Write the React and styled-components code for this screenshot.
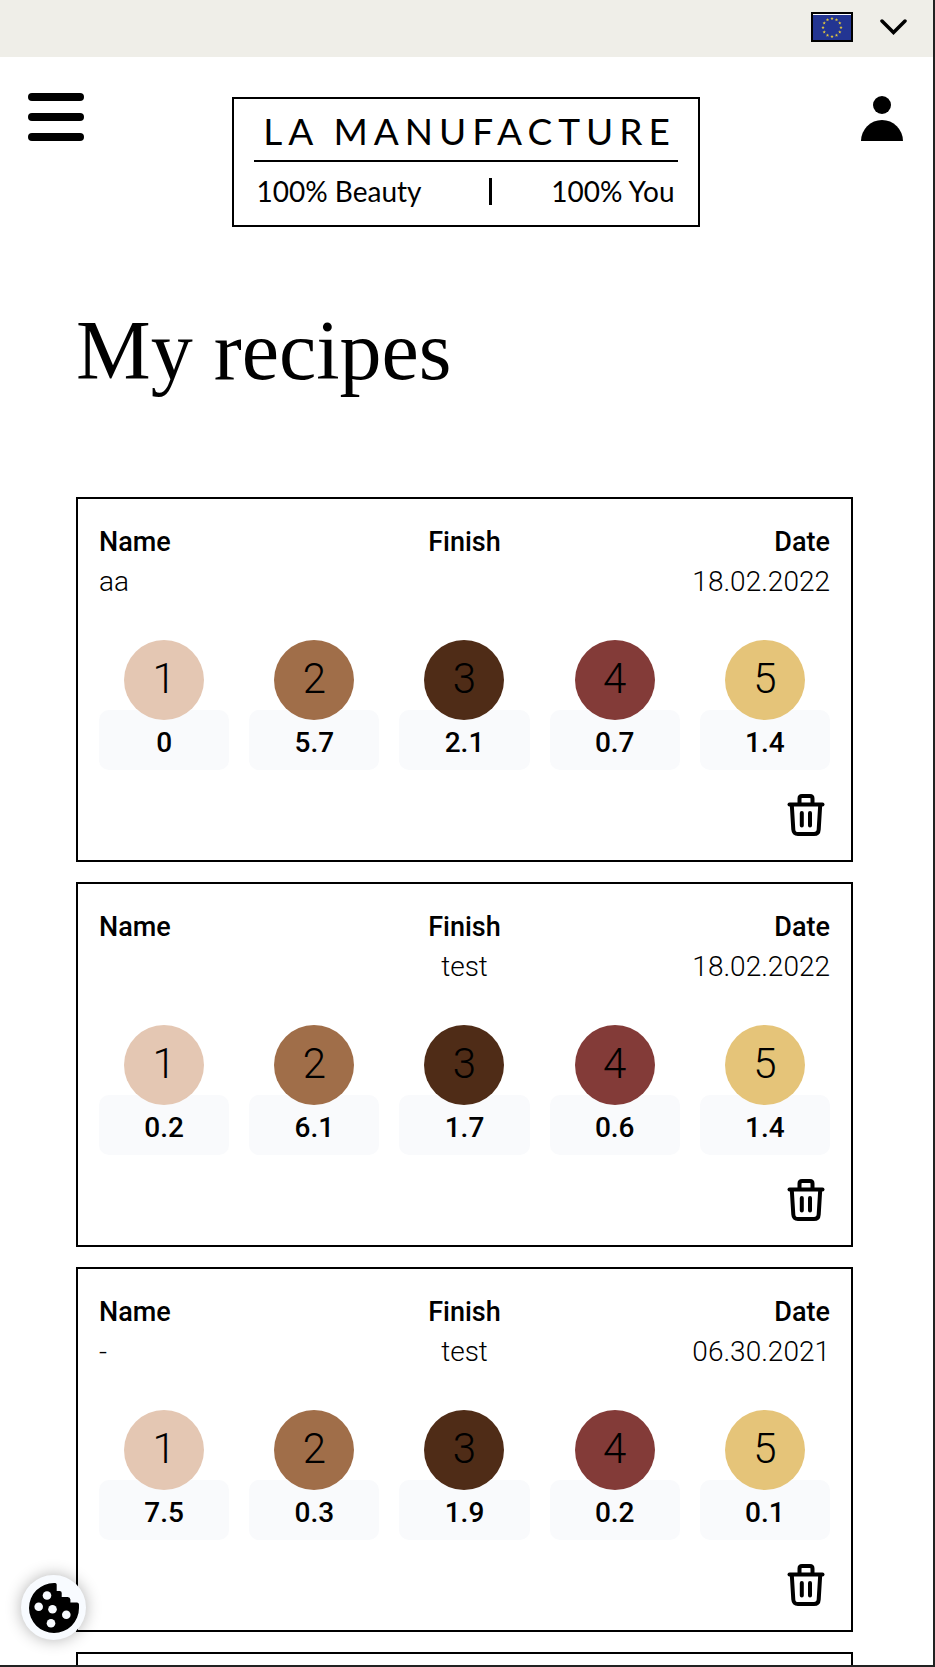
import React from "react";
import styled, { createGlobalStyle } from "styled-components";

const GlobalStyle = createGlobalStyle`
  *, *::before, *::after { box-sizing: border-box; }
  body { margin: 0; background: #fff; color: #000; font-family: Roboto, "Liberation Sans", sans-serif; }
  button { margin: 0; padding: 0; border: 0; background: none; color: inherit; font: inherit; cursor: pointer; }
  svg { display: block; }
`;

const Page = styled.div`
  height: 100vh;
  overflow-y: auto;
  scrollbar-width: none;
  border: solid #222;
  border-width: 0 2px 2px 0;
`;

const RegionBar = styled.div`
  display: flex;
  justify-content: flex-end;
  align-items: flex-start;
  height: 57px;
  padding: 12px 26px 0 0;
  background: #efeee8;
`;

const RegionButton = styled.button`
  display: flex;
  align-items: center;
  gap: 27px;
`;

const Flag = styled.span`
  display: block;
  width: 42px;
  border: 2px solid #000;
  background: #fff;
`;

const Header = styled.header`
  display: grid;
  grid-template-columns: 1fr minmax(0, 468px) 1fr;
  align-items: start;
  padding: 36px 30px 0 28px;
`;

const MenuButton = styled.button`
  display: flex;
  flex-direction: column;
  gap: 12px;
  width: 56px;
`;

const MenuBar = styled.span`
  height: 8px;
  border-radius: 4px;
  background: #000;
`;

const AccountButton = styled.button`
  justify-self: end;
  margin-top: 3px;
`;

const Logo = styled.a`
  display: block;
  margin-top: 4px;
  padding: 11px 20px 12px;
  border: 2px solid #000;
  color: #000;
  font-family: Lato, sans-serif;
  text-decoration: none;
`;

const Brand = styled.span`
  display: flex;
  justify-content: center;
  padding: 0 0 8px 8px;
  border-bottom: 2px solid #000;
  font-size: 37px;
  line-height: 42px;
  letter-spacing: 6px;
  white-space: nowrap;
`;

const Slogan = styled.span`
  display: flex;
  justify-content: space-between;
  align-items: center;
  padding: 8px 3px 0;
  font-size: 28px;
  line-height: 43px;
  white-space: nowrap;
`;

const Divider = styled.span`
  width: 3px;
  height: 27px;
  margin-left: 8px;
  background: #000;
`;

const Main = styled.main`
  padding: 74px 80px 20px 76px;
`;

const Title = styled.h1`
  margin: 0 0 96px;
  font: 400 84px/100px "Liberation Serif", serif;
`;

const RecipeList = styled.div`
  display: flex;
  flex-direction: column;
  gap: 20px;
`;

const Card = styled.article`
  display: flex;
  flex-direction: column;
  flex-shrink: 0;
  min-height: 365px;
  padding: 23px 21px 24px;
  border: 2px solid #000;
`;

const Info = styled.dl`
  display: grid;
  grid-template-columns: repeat(3, 1fr);
  margin: 0 0 38px;
`;

const Field = styled.div`
  text-align: ${(p) => p.$align};
`;

const Label = styled.dt`
  font-size: 27px;
  font-weight: 500;
  line-height: 40px;
`;

const Value = styled.dd`
  min-height: 40px;
  margin: 0;
  font-size: 28px;
  font-weight: 300;
  line-height: 40px;
`;

const Shades = styled.div`
  display: grid;
  grid-template-columns: repeat(5, 1fr);
  gap: 20px;
`;

const Shade = styled.div`
  display: flex;
  flex-direction: column;
  align-items: center;
`;

const Swatch = styled.div`
  z-index: 1;
  width: 80px;
  height: 80px;
  border-radius: 50%;
  background: ${(p) => p.$color};
  font-size: 42px;
  font-weight: 300;
  line-height: 78px;
  text-align: center;
`;

const Amount = styled.div`
  align-self: stretch;
  margin-top: -10px;
  padding: 13px 0 7px;
  border-radius: 10px;
  background: #f9fafc;
  font-size: 28px;
  font-weight: 500;
  line-height: 40px;
  text-align: center;
`;

const DeleteButton = styled.button`
  align-self: flex-end;
  margin: 24px 5px 0 0;
`;

const CookieButton = styled.button`
  position: fixed;
  bottom: 27px;
  left: 21px;
  z-index: 2;
  display: grid;
  place-items: center;
  width: 65px;
  height: 65px;
  border-radius: 50%;
  background: #f8fbff;
  box-shadow: 0 0 16px rgba(0, 0, 0, 0.3);
`;

const colors = ["#e4c7b3", "#a06e49", "#4f2c17", "#833b38", "#e5c479"];

const recipes = [
  { name: "aa", finish: "", date: "18.02.2022", amounts: ["0", "5.7", "2.1", "0.7", "1.4"] },
  { name: "", finish: "test", date: "18.02.2022", amounts: ["0.2", "6.1", "1.7", "0.6", "1.4"] },
  { name: "-", finish: "test", date: "06.30.2021", amounts: ["7.5", "0.3", "1.9", "0.2", "0.1"] },
];

function EuFlag() {
  const stars = Array.from({ length: 12 }, (_, i) => {
    const a = (i * Math.PI) / 6;
    return [19 + 9 * Math.sin(a), 13.5 - 9 * Math.cos(a)];
  });
  return (
    <Flag>
      <svg width="38" height="26" viewBox="0 0 38 26" aria-hidden="true">
        <rect y="1" width="38" height="25" fill="#233592" />
        {stars.map(([x, y], i) => (
          <path
            key={i}
            transform={`translate(${x} ${y})`}
            d="M0-1.7.45-.5 1.7-.5.7.3 1.05 1.5 0 .8-1.05 1.5-.7.3-1.7-.5-.45-.5Z"
            fill="#e8cc3c"
          />
        ))}
      </svg>
    </Flag>
  );
}

function TrashIcon() {
  return (
    <svg width="38" height="42" viewBox="0 0 38 42" fill="none" stroke="#000" strokeWidth="4" strokeLinecap="round" strokeLinejoin="round" aria-hidden="true">
      <path d="M2.500 10.500h33" />
      <path d="M12.500 10V4.500q0-2.500 2.500-2.500h8q2.500 0 2.500 2.500V10" />
      <path d="M4.800 11 6.300 35.500Q6.600 40 11 40H27Q31.400 40 31.700 35.500L33.200 11" />
      <path d="M14.800 19v12.500M23 19v12.500" />
    </svg>
  );
}

function CookieIcon() {
  return (
    <svg width="50" height="50" viewBox="0 0 50 50" aria-hidden="true">
      <path d="M25 0q2.500-.3 2.700 1.500V8h3q2 .2 2 2v4h6q2.500.2 2.700 2.500V19.500H48q1.800.1 2 2V25A25 25 0 1 1 25 0Z" />
      <g fill="#f8fbff">
        <circle cx="18" cy="12.500" r="4.300" />
        <circle cx="9.700" cy="23.700" r="4.300" />
        <circle cx="23.500" cy="26.300" r="4.300" />
        <circle cx="37.300" cy="31.800" r="4.300" />
        <circle cx="22" cy="40.300" r="4.300" />
      </g>
    </svg>
  );
}

function RecipeCard({ recipe }) {
  return (
    <Card>
      <Info>
        <Field $align="left">
          <Label>Name</Label>
          <Value>{recipe.name}</Value>
        </Field>
        <Field $align="center">
          <Label>Finish</Label>
          <Value>{recipe.finish}</Value>
        </Field>
        <Field $align="right">
          <Label>Date</Label>
          <Value>{recipe.date}</Value>
        </Field>
      </Info>
      <Shades>
        {recipe.amounts.map((amount, i) => (
          <Shade key={i}>
            <Swatch $color={colors[i]}>{i + 1}</Swatch>
            <Amount>{amount}</Amount>
          </Shade>
        ))}
      </Shades>
      <DeleteButton type="button" aria-label="Delete recipe">
        <TrashIcon />
      </DeleteButton>
    </Card>
  );
}

export default function App() {
  return (
    <>
      <GlobalStyle />
      <Page>
        <RegionBar>
          <RegionButton type="button" aria-label="Choose region">
            <EuFlag />
            <svg width="27" height="16" viewBox="0 0 27 16" fill="none" stroke="#000" strokeWidth="3.500" strokeLinecap="round" aria-hidden="true">
              <path d="M2 2 13.500 13.500 25 2" />
            </svg>
          </RegionButton>
        </RegionBar>
        <Header>
          <MenuButton type="button" aria-label="Menu">
            <MenuBar />
            <MenuBar />
            <MenuBar />
          </MenuButton>
          <Logo href="#">
            <Brand>LA MANUFACTURE</Brand>
            <Slogan>
              <span>100% Beauty</span>
              <Divider />
              <span>100% You</span>
            </Slogan>
          </Logo>
          <AccountButton type="button" aria-label="Account">
            <svg width="42" height="45" viewBox="0 0 42 45" aria-hidden="true">
              <circle cx="21" cy="9" r="9" />
              <path d="M0 45a21 21 0 0 1 42 0Z" />
            </svg>
          </AccountButton>
        </Header>
        <Main>
          <Title>My recipes</Title>
          <RecipeList>
            {recipes.map((recipe, i) => (
              <RecipeCard key={i} recipe={recipe} />
            ))}
            <Card />
          </RecipeList>
        </Main>
        <CookieButton type="button" aria-label="Cookie settings">
          <CookieIcon />
        </CookieButton>
      </Page>
    </>
  );
}
